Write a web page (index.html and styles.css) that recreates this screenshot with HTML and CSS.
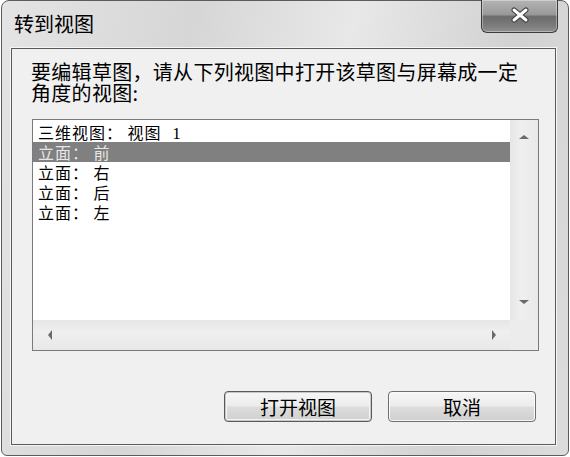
FILE: index.html
```html
<!DOCTYPE html>
<html lang="zh">
<head>
<meta charset="utf-8">
<title>转到视图</title>
<link rel="stylesheet" href="styles.css">
</head>
<body>
<div class="window">
  <div class="titlebar">
    <span class="title">转到视图</span>
    <div class="close">
      <svg width="20" height="16" viewBox="0 0 20 16">
        <path d="M4 3 L16 13 M16 3 L4 13" stroke="#3a3a3a" stroke-width="5" stroke-linecap="round"/>
        <path d="M4 3 L16 13 M16 3 L4 13" stroke="#ffffff" stroke-width="3" stroke-linecap="round"/>
      </svg>
    </div>
  </div>
  <div class="client">
    <p class="prompt">要编辑草图，请从下列视图中打开该草图与屏幕成一定<br>角度的视图:</p>
    <div class="listbox">
      <ul class="items"><li>三维视图： 视图 <span class="num">1</span></li><li class="selected">立面： 前</li><li>立面： 右</li><li>立面： 后</li><li>立面： 左</li></ul>
      <div class="vscroll">
        <span class="arrow up"></span>
        <span class="arrow down"></span>
      </div>
      <div class="hscroll">
        <span class="arrow left"></span>
        <span class="arrow right"></span>
      </div>
      <div class="corner"></div>
    </div>
    <div class="buttons">
      <button class="btn default">打开视图</button>
      <button class="btn">取消</button>
    </div>
  </div>
</div>
</body>
</html>
```

FILE: styles.css
```css
html, body {
  margin: 0;
  padding: 0;
  background: #ffffff;
}

body {
  width: 570px;
  height: 457px;
  overflow: hidden;
  font-family: "Noto Sans CJK SC", "Noto Sans", sans-serif;
}

.window {
  position: relative;
  box-sizing: border-box;
  width: 568px;
  height: 456px;
  margin-left: 1px;
  border: 1px solid #5c5c5c;
  border-radius: 8px 8px 6px 6px;
  background: linear-gradient(100deg, #e4e4e4 0%, #d6d6d6 30%, #e8e8e8 55%, #d2d2d2 80%, #dcdcdc 100%);
  padding: 0 12px 10px 9px;
  display: flex;
  flex-direction: column;
}

.titlebar {
  height: 47px;
  flex: none;
  display: flex;
  align-items: flex-start;
}

.title {
  font-size: 20px;
  line-height: 24px;
  padding-top: 11px;
  padding-left: 3px;
  color: #000000;
}

.close {
  position: absolute;
  top: -1px;
  right: 10px;
  width: 77px;
  height: 33px;
  box-sizing: border-box;
  border: 1px solid #3c3c3c;
  border-top: none;
  border-radius: 0 0 6px 6px;
  background: linear-gradient(to bottom, #b4b4b4 0%, #999999 45%, #6c6c6c 52%, #7c7c7c 80%, #909090 100%);
  box-shadow: inset 0 0 0 1px rgba(255,255,255,0.35);
  display: flex;
  align-items: center;
  justify-content: center;
}

.close svg {
  margin-top: -2px;
}

.client {
  flex: 1;
  min-height: 0;
  border: 1px solid #5a5a5a;
  box-shadow: 0 0 0 1px #f6f6f6;
  background: #f0f0f0;
  padding: 12px 18px 0 19px;
  display: flex;
  flex-direction: column;
}

.prompt {
  margin: 0;
  font-size: 20px;
  line-height: 21px;
  color: #000000;
  letter-spacing: 0.3px;
}

.listbox {
  flex: none;
  margin-top: 16px;
  margin-left: 1px;
  width: 507px;
  height: 232px;
  box-sizing: border-box;
  border: 1px solid #7a7a7a;
  background: #ffffff;
  display: grid;
  grid-template-columns: 477px 28px;
  grid-template-rows: 200px 30px;
  overflow: hidden;
}

.items {
  list-style: none;
  margin: 0;
  padding: 2px 0 0 0;
  font-family: "Noto Sans CJK SC", sans-serif;
  font-size: 16px;
  line-height: 20px;
  letter-spacing: 1px;
  color: #000000;
  overflow: hidden;
}

.items li {
  height: 20px;
  padding-left: 5px;
  white-space: pre;
}

.items .num {
  font-family: "Liberation Serif", serif;
  font-size: 17px;
  padding-left: 6px;
}

.items li.selected {
  background: #808080;
  color: #e6e6e6;
}

.vscroll {
  background: linear-gradient(to right, #e6e6e6, #efefef 40%, #e8e8e8);
  display: flex;
  flex-direction: column;
  justify-content: space-between;
  align-items: center;
  padding: 15px 0 16px;
}

.hscroll {
  background: linear-gradient(to bottom, #e6e6e6, #efefef 40%, #e8e8e8);
  display: flex;
  justify-content: space-between;
  align-items: center;
  padding: 0 14px 0 15px;
}

.corner {
  background: #ececec;
}

.arrow {
  width: 0;
  height: 0;
  display: block;
}

.arrow.up {
  border-left: 5px solid transparent;
  border-right: 5px solid transparent;
  border-bottom: 4px solid #6a6a6a;
}

.arrow.down {
  border-left: 5px solid transparent;
  border-right: 5px solid transparent;
  border-top: 4px solid #6a6a6a;
}

.arrow.left {
  border-top: 5px solid transparent;
  border-bottom: 5px solid transparent;
  border-right: 4px solid #6a6a6a;
}

.arrow.right {
  border-top: 5px solid transparent;
  border-bottom: 5px solid transparent;
  border-left: 4px solid #6a6a6a;
}

.buttons {
  margin-top: 40px;
  display: flex;
  justify-content: flex-end;
  gap: 16px;
  padding-right: 1px;
}

.btn {
  width: 148px;
  height: 31px;
  box-sizing: border-box;
  border: 1px solid #6f6f6f;
  border-radius: 4px;
  background: linear-gradient(to bottom, #f6f6f6 0%, #ececec 48%, #dcdcdc 52%, #d0d0d0 100%);
  box-shadow: inset 0 0 0 1px #fafafa;
  font-family: "Noto Sans CJK SC", sans-serif;
  font-size: 19px;
  line-height: 27px;
  color: #000000;
  padding: 0;
}

.btn.default {
  border-color: #5a5a5a;
  box-shadow: inset 0 0 0 1px #c8c8c8, inset 0 0 0 2px #f4f4f4;
}
```
